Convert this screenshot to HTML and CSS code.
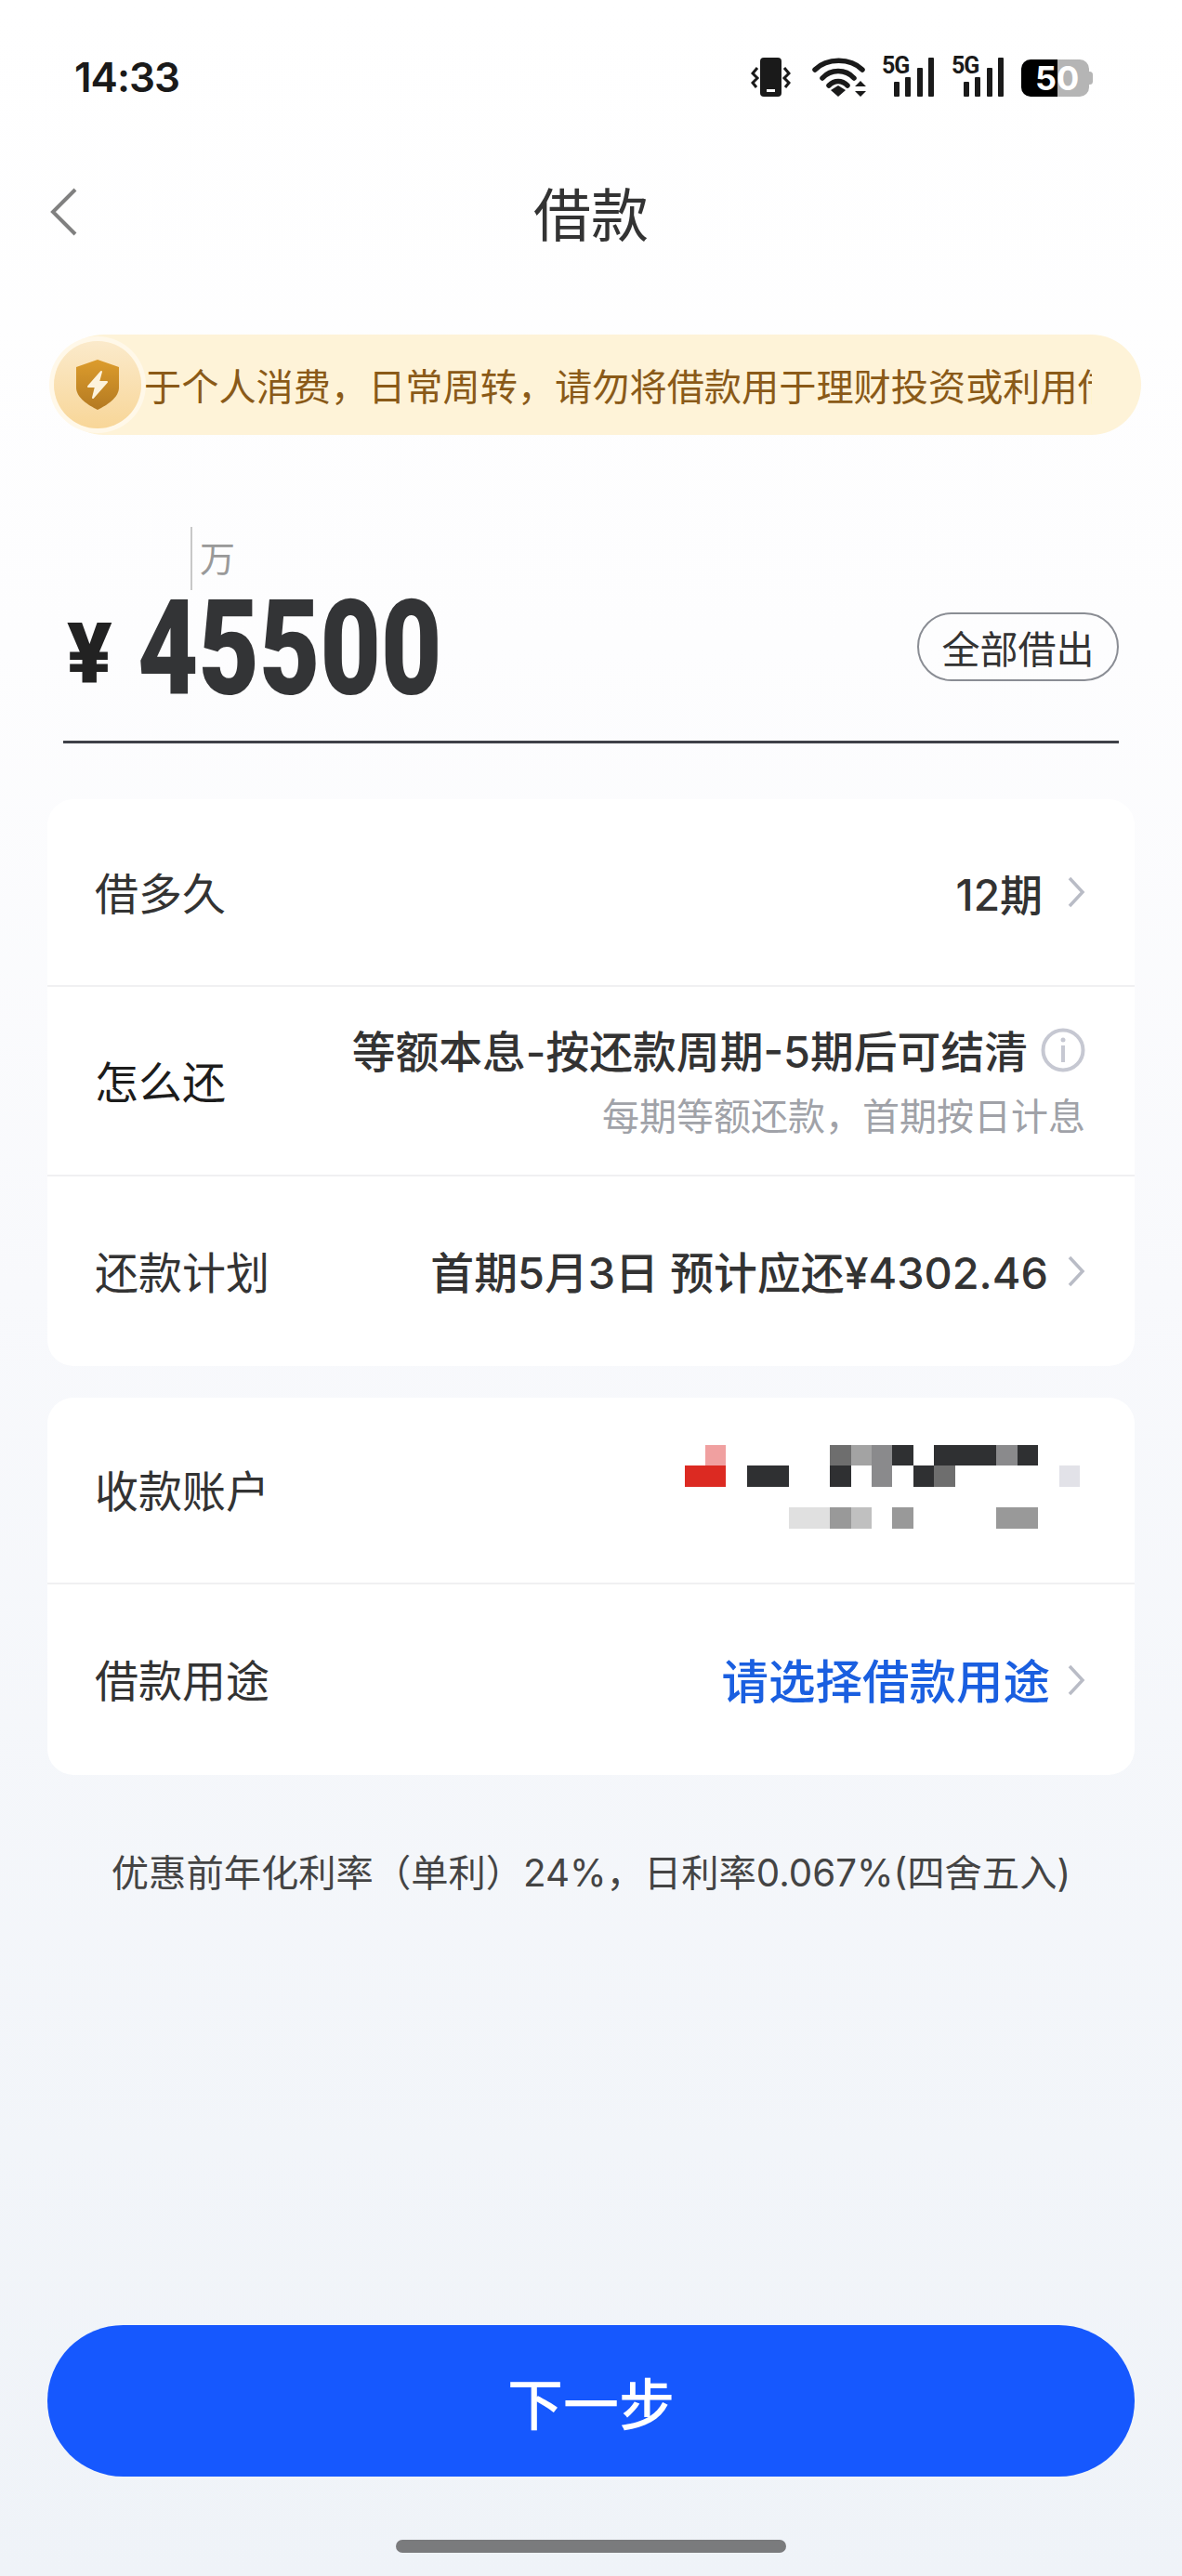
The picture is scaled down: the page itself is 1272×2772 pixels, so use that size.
FILE: index.html
```html
<!DOCTYPE html>
<html lang="zh-CN">
<head>
    <meta charset="UTF-8">
    <meta name="viewport" content="width=device-width, initial-scale=1.0">
    <title>借款</title>
    <link rel="stylesheet" href="styles.css">
</head>
<body>
    <div id="page">
        <div class="status">
            <span class="time">14:33</span>
            <div class="status-icons">
                <svg class="ic-vibrate" width="43" height="42" viewBox="0 0 43 42">
                    <rect x="10" y="0" width="23" height="42" rx="4" fill="#1a1a1a"/>
                    <rect x="17" y="34" width="9" height="3" fill="#fff"/>
                    <path d="M7 11L2 17l5 5-5 5 4 5" fill="none" stroke="#1a1a1a" stroke-width="3"/>
                    <path d="M36 11l5 6-5 5 5 5-4 5" fill="none" stroke="#1a1a1a" stroke-width="3"/>
                </svg>
                <svg class="ic-wifi" width="59" height="42" viewBox="0 0 59 42">
                    <path d="M3 13C16 0 41 0 54 13" fill="none" stroke="#1a1a1a" stroke-width="5.500" stroke-linecap="round"/>
                    <path d="M11 22C20 12 36 12 45 22" fill="none" stroke="#1a1a1a" stroke-width="5.500" stroke-linecap="round"/>
                    <path d="M18 30C24 24 32 24 38 30" fill="none" stroke="#1a1a1a" stroke-width="5.500" stroke-linecap="round"/>
                    <path d="M28 42l-8-7 8-5 8 5z" fill="#1a1a1a"/>
                    <path d="M52 25l6 6h-12zM52 42l6-6h-12z" fill="#1a1a1a"/>
                </svg>
                <div class="signal">
                    <span class="net">5G</span>
                    <span class="bars"><i class="b1"></i><i class="b2"></i><i class="b3"></i><i class="b4"></i></span>
                </div>
                <div class="signal">
                    <span class="net">5G</span>
                    <span class="bars"><i class="b1"></i><i class="b2"></i><i class="b3"></i><i class="b4"></i></span>
                </div>
                <div class="battery"><span class="batt-num">50</span></div>
            </div>
        </div>

        <div class="nav">
            <svg class="back" width="30" height="52" viewBox="0 0 30 52">
                <path d="M28 2L4 26l24 24" fill="none" stroke="#808080" stroke-width="4"/>
            </svg>
            <span class="nav-title">借款</span>
        </div>

        <div class="notice">
            <div class="notice-badge">
                <svg width="48" height="54" viewBox="0 0 48 54">
                    <defs>
                        <linearGradient id="shield" x1="0" y1="0" x2="0" y2="1">
                            <stop offset="0" stop-color="#dc9c2c"/>
                            <stop offset="1" stop-color="#b47a22"/>
                        </linearGradient>
                    </defs>
                    <path d="M24 0l23 8v22c0 11-13 19-23 24C14 49 1 41 1 30V8z" fill="url(#shield)"/>
                    <path d="M28 13L14 29h8l-3 12 15-17h-9z" fill="#fdf3dc" stroke="#fdf3dc" stroke-width="2" stroke-linejoin="round"/>
                </svg>
            </div>
            <div class="notice-text">于个人消费，日常周转，请勿将借款用于理财投资或利用借款</div>
        </div>

        <div class="amount">
            <div class="unit-row"><span class="caret"></span><span class="unit">万</span></div>
            <div class="amount-row">
                <span class="yen">¥</span>
                <span class="digits">45500</span>
                <button class="all-btn">全部借出</button>
            </div>
        </div>

        <div class="card">
            <div class="row row-a">
                <span class="label">借多久</span>
                <div class="val">
                    <span class="val-text">12期</span>
                    <svg class="chev" width="20" height="34" viewBox="0 0 20 34"><path d="M3 2l14 15L3 32" fill="none" stroke="#b9bcc6" stroke-width="3.500"/></svg>
                </div>
            </div>
            <div class="row row-b">
                <span class="label dark">怎么还</span>
                <div class="val-col">
                    <div class="val">
                        <span class="val-text">等额本息-按还款周期-5期后可结清</span>
                        <svg class="info" width="48" height="48" viewBox="0 0 48 48">
                            <circle cx="24" cy="24" r="21.500" fill="none" stroke="#c6c8d2" stroke-width="4"/>
                            <circle cx="24" cy="13" r="2.500" fill="#c6c8d2"/>
                            <rect x="22" y="19" width="4" height="18" fill="#c6c8d2"/>
                        </svg>
                    </div>
                    <span class="sub">每期等额还款，首期按日计息</span>
                </div>
            </div>
            <div class="row row-c">
                <span class="label">还款计划</span>
                <div class="val">
                    <span class="val-text">首期5月3日 预计应还¥4302.46</span>
                    <svg class="chev" width="20" height="34" viewBox="0 0 20 34"><path d="M3 2l14 15L3 32" fill="none" stroke="#b9bcc6" stroke-width="3.500"/></svg>
                </div>
            </div>
        </div>

        <div class="card card2">
            <div class="row row-d">
                <span class="label">收款账户</span>
                <!-- blurred account number -->
                <div class="mosaic">
                    <i class="px pink" style="grid-area:1/2/2/3"></i>
                    <i class="px g6" style="grid-area:1/8/2/9"></i>
                    <i class="px ga" style="grid-area:1/9/2/10"></i>
                    <i class="px g8" style="grid-area:1/10/2/11"></i>
                    <i class="px dk" style="grid-area:1/11/2/12"></i>
                    <i class="px dk" style="grid-area:1/13/2/16"></i>
                    <i class="px g8" style="grid-area:1/16/2/17"></i>
                    <i class="px dk" style="grid-area:1/17/2/18"></i>
                    <i class="px red" style="grid-area:2/1/3/3"></i>
                    <i class="px dk" style="grid-area:2/4/3/6"></i>
                    <i class="px dk" style="grid-area:2/8/3/9"></i>
                    <i class="px g8" style="grid-area:2/10/3/11"></i>
                    <i class="px dk" style="grid-area:2/12/3/13"></i>
                    <i class="px g6" style="grid-area:2/13/3/14"></i>
                    <i class="px ge" style="grid-area:2/19/3/20"></i>
                    <i class="px gd" style="grid-area:4/6/5/8"></i>
                    <i class="px g9" style="grid-area:4/8/5/9"></i>
                    <i class="px gc" style="grid-area:4/9/5/10"></i>
                    <i class="px g9" style="grid-area:4/11/5/12"></i>
                    <i class="px g9" style="grid-area:4/16/5/18"></i>
                </div>
            </div>
            <div class="row row-e">
                <span class="label">借款用途</span>
                <div class="val">
                    <span class="val-text blue">请选择借款用途</span>
                    <svg class="chev" width="20" height="34" viewBox="0 0 20 34"><path d="M3 2l14 15L3 32" fill="none" stroke="#b9bcc6" stroke-width="3.500"/></svg>
                </div>
            </div>
        </div>

        <p class="rate">优惠前年化利率（单利）24%，日利率0.067%(四舍五入)</p>

        <button class="next-btn">下一步</button>
        <div class="home-bar"></div>
    </div>
</body>
</html>
```

FILE: styles.css
```css
*{
    box-sizing: border-box;
}
body{
    margin: 0;
    padding: 0;
    font-family: Inter, "Noto Sans CJK SC", sans-serif;
    color: #333;
}
#page{
    width: 1272px;
    height: 2772px;
    overflow: hidden;
    background: linear-gradient(180deg, #ffffff 0%, #fdfdfe 25%, #f8f9fc 50%, #eff3f8 100%);
}

/* status bar */
.status{
    height: 166px;
    display: flex;
    justify-content: space-between;
    align-items: center;
    padding: 0 96px 0 80px;
}
.time{
    font-size: 44px;
    font-weight: 600;
    color: #1a1a1a;
    letter-spacing: -1px;
}
.status-icons{
    display: flex;
    align-items: flex-end;
    gap: 19px;
    height: 42px;
}
.ic-wifi{
    margin-left: 4px;
    margin-right: -3px;
}
.signal{
    position: relative;
    width: 56px;
    height: 42px;
}
.net{
    position: absolute;
    left: 0;
    top: -3px;
    font-family: Roboto, sans-serif;
    font-size: 25px;
    line-height: 23px;
    font-weight: 700;
    letter-spacing: -1px;
    color: #1a1a1a;
}
.bars{
    position: absolute;
    right: 0;
    bottom: 0;
    display: flex;
    align-items: flex-end;
    gap: 6.500px;
}
.bars i{
    display: block;
    width: 6px;
    background: #1a1a1a;
    border-radius: 1px;
}
.b1{ height: 16px; }
.b2{ height: 21px; }
.b3{ height: 31px; }
.b4{ height: 42px; }
.battery{
    position: relative;
    width: 73px;
    height: 40px;
    margin-right: 4px;
    border-radius: 10px;
    background: linear-gradient(90deg, #000 0, #000 39px, #b5b5b5 39px, #b5b5b5 100%);
    padding-left: 15px;
}
.battery::after{
    content: "";
    position: absolute;
    right: -4px;
    top: 13px;
    width: 7px;
    height: 14px;
    border-radius: 4px;
    background: #b5b5b5;
}
.batt-num{
    font-size: 36px;
    line-height: 40px;
    font-weight: 700;
    color: #fff;
    display: block;
}

/* title */
.nav{
    height: 128px;
    position: relative;
    display: flex;
    align-items: center;
    justify-content: center;
}
.back{
    position: absolute;
    left: 53px;
    top: 36px;
}
.nav-title{
    font-size: 62px;
    color: #333;
    margin-top: -4px;
}

/* notice */
.notice{
    margin: 66px 44px 0 58px;
    height: 108px;
    border-radius: 54px;
    background: #fef3d8;
    display: flex;
    align-items: center;
    padding-right: 53px;
}
.notice-badge{
    flex: none;
    width: 94px;
    height: 94px;
    border-radius: 50%;
    background: linear-gradient(180deg, #fbeacb, #f8d698);
    box-shadow: 0 0 0 5px #fff8e9;
    display: flex;
    align-items: center;
    justify-content: center;
}
.notice-text{
    flex: 1;
    margin-left: 3px;
    margin-top: -2px;
    overflow: hidden;
    white-space: nowrap;
    font-size: 40.200px;
    color: #8a5a18;
}

/* amount */
.amount{
    margin: 99px 68px 0;
    border-bottom: 3px solid #3f4148;
}
.unit-row{
    height: 68px;
    padding-left: 137px;
    display: flex;
}
.caret{
    width: 2px;
    background: #c8c8c8;
}
.unit{
    margin-left: 8px;
    font-size: 38px;
    line-height: 38px;
    padding-top: 15px;
    color: #999;
}
.amount-row{
    height: 162px;
    padding-bottom: 40px;
    display: flex;
    align-items: center;
}
.yen{
    margin-left: 4px;
    margin-top: 18px;
    font-family: Roboto, sans-serif;
    font-size: 90px;
    font-weight: 900;
    line-height: 1;
    color: #222;
}
.digits{
    margin-left: 27px;
    margin-top: 5px;
    font-family: Roboto, sans-serif;
    font-size: 143px;
    font-weight: 900;
    line-height: 0.75;
    color: #333436;
    transform: scaleX(0.79);
    transform-origin: left center;
}
.all-btn{
    margin-left: auto;
    margin-top: -1px;
    width: 217px;
    height: 74px;
    border: 2px solid #8a8d94;
    border-radius: 37px;
    background: transparent;
    font-family: inherit;
    font-size: 41px;
    color: #333;
    padding: 0;
}

/* cards */
.card{
    margin: 60px 51px 0;
    background: #fff;
    border-radius: 28px;
}
.card2{
    margin-top: 34px;
}
.row{
    display: flex;
    align-items: center;
    justify-content: space-between;
    padding: 0 53px 0 51px;
    border-bottom: 2px solid #f0f0f2;
}
.row:last-child{
    border-bottom: none;
}
.row-a{ height: 202px; }
.row-b{ height: 204px; }
.row-c{ height: 204px; }
.row-d{ height: 201px; }
.row-e{ height: 205px; }
.label{
    font-size: 47px;
    color: #333;
    margin-top: -4px;
}
.dark{
    color: #1c1c1c;
}
.val{
    display: flex;
    align-items: center;
}
.val-text{
    font-size: 46.800px;
    font-weight: 500;
    color: #333;
    margin-top: -3px;
}
.chev{
    margin-left: 20px;
}
.row-a .chev{
    margin-left: 26px;
}
.row-a .val-text{
    font-size: 46px;
    margin-top: 0;
}
.row-e .chev{
    margin-left: 18px;
}
.val-col{
    display: flex;
    flex-direction: column;
    align-items: flex-end;
}
.info{
    margin-left: 14px;
}
.sub{
    margin-top: 8px;
    font-size: 40px;
    color: #a0a2a8;
}
.row-e .blue{
    font-size: 50.500px;
    color: #1a5fe0;
}

/* blurred account */
.mosaic{
    display: grid;
    grid-template-columns: repeat(19, 22.4px);
    grid-template-rows: repeat(4, 22.5px);
    margin-right: 6px;
    margin-top: -8px;
}
.px{
    display: block;
}
.dk{ background: #2f3032; }
.red{ background: #dc2a22; }
.pink{ background: #f0a0a0; }
.g6{ background: #6e6e6e; }
.g8{ background: #8a8a8c; }
.g9{ background: #999; }
.ga{ background: #a3a3a3; }
.gc{ background: #c0c0c0; }
.gd{ background: #e0e0e0; }
.ge{ background: #e2e2e8; }

/* footer */
.rate{
    margin: 82px 0 0;
    text-align: center;
    font-size: 40.300px;
    line-height: 48px;
    color: #444;
}
.next-btn{
    display: block;
    margin: 462px auto 0;
    width: 1170px;
    height: 163px;
    border: none;
    border-radius: 82px;
    background: #1658fe;
    color: #fff;
    font-family: inherit;
    font-size: 60px;
    font-weight: 500;
}
.home-bar{
    width: 420px;
    height: 14px;
    margin: 68px auto 0;
    border-radius: 7px;
    background: #7a7b7d;
}
```
